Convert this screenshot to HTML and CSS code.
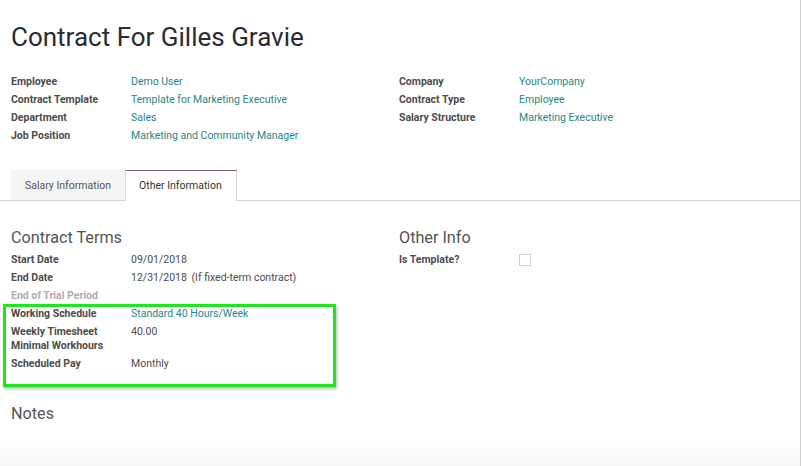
FILE: index.html
```html
<!DOCTYPE html>
<html>
<head>
<meta charset="utf-8">
<link rel="stylesheet" href="styles.css">
</head>
<body>
<div class="sheet">
  <h1 class="title">Contract For Gilles Gravie</h1>
  <div class="group">
    <div class="fields">
      <div class="lbl">Employee</div><div class="val link">Demo User</div>
      <div class="lbl">Contract Template</div><div class="val link">Template for Marketing Executive</div>
      <div class="lbl">Department</div><div class="val link">Sales</div>
      <div class="lbl">Job Position</div><div class="val link">Marketing and Community Manager</div>
    </div>
    <div class="fields">
      <div class="lbl">Company</div><div class="val link">YourCompany</div>
      <div class="lbl">Contract Type</div><div class="val link">Employee</div>
      <div class="lbl">Salary Structure</div><div class="val link">Marketing Executive</div>
    </div>
  </div>
  <div class="tabs">
    <div class="tab">Salary Information</div>
    <div class="tab active">Other Information</div>
  </div>
  <div class="tab-content">
    <div class="group">
      <div class="col">
        <h2 class="sub">Contract Terms</h2>
        <div class="fields">
          <div class="lbl">Start Date</div><div class="val">09/01/2018</div>
          <div class="lbl">End Date</div><div class="val">12/31/2018 <span class="hint">(If fixed-term contract)</span></div>
          <div class="lbl muted">End of Trial Period</div><div class="val"></div>
        </div>
        <div class="highlight">
          <div class="fields">
            <div class="lbl">Working Schedule</div><div class="val link">Standard 40 Hours/Week</div>
            <div class="lbl">Weekly Timesheet Minimal Workhours</div><div class="val">40.00</div>
            <div class="lbl">Scheduled Pay</div><div class="val">Monthly</div>
          </div>
        </div>
      </div>
      <div class="col">
        <h2 class="sub">Other Info</h2>
        <div class="fields">
          <div class="lbl">Is Template?</div><div class="val"><span class="checkbox"></span></div>
        </div>
      </div>
    </div>
    <h2 class="sub notes">Notes</h2>
  </div>
  <div class="fade"></div>
</div>
</body>
</html>
```
FILE: styles.css
```css
* { box-sizing: border-box; }
html, body { margin: 0; padding: 0; background: #fff; }
body {
  font-family: Roboto, "Liberation Sans", sans-serif;
  font-size: 10.5px;
  color: #4c4c4c;
  width: 801px;
  height: 466px;
  overflow: hidden;
}
.sheet {
  width: 801px;
  height: 466px;
  border-right: 1px solid #cfcfcf;
  display: flex;
  flex-direction: column;
}
.title {
  margin: 22px 0 0 11px;
  font-size: 26px;
  line-height: 30px;
  font-weight: 400;
  color: #2b2b33;
}
.group {
  display: grid;
  grid-template-columns: 388px 388px;
  padding-left: 11px;
}
.sheet > .group { margin-top: 21px; }
.fields {
  display: grid;
  grid-template-columns: 120px 1fr;
  align-content: start;
}
.lbl, .val {
  line-height: 14px;
  padding: 2px 0;
}
.lbl {
  font-weight: 700;
  color: #4c4c4c;
  padding-right: 10px;
}
.lbl.muted { color: #adadad; }
.val { color: #4c4c4c; }
.link { color: #1f8787; }
.hint { color: #4c4c4c; margin-left: 2px; }
.tabs {
  display: flex;
  margin-top: 25px;
  padding-left: 11px;
  border-bottom: 1px solid #d4d4d4;
  height: 31px;
}
.tab {
  height: 30px;
  line-height: 31px;
  padding: 0 14px;
  color: #555;
  background: #f5f5f5;
}
.tab.active {
  background: #fff;
  color: #333;
  padding: 0 14px 0 13px;
  border-top: 1px solid #7c5b79;
  border-left: 1px solid #d4d4d4;
  border-right: 1px solid #d4d4d4;
  height: 31px;
  line-height: 30px;
  margin-bottom: -1px;
}
.tab-content { padding-top: 27px; }
.tab-content > .group { padding-left: 11px; }
.sub {
  margin: 0;
  font-size: 16.2px;
  line-height: 20px;
  font-weight: 400;
  color: #555;
  padding-bottom: 3px;
}
.highlight {
  width: 333px;
  margin: -1px 0 0 -8px;
  border: 3px solid #1ee61e;
  padding: 0 0 11px 5px;
  box-shadow: 1px 2px 3px rgba(0, 0, 0, 0.28);
}
.highlight .fields { margin-top: -2px; }
.checkbox {
  display: inline-block;
  width: 12px;
  height: 12px;
  border: 1px solid #cfcfcf;
  margin-top: -1px;
  vertical-align: middle;
}
.notes { margin: 17px 0 0 11px; }
.fade {
  margin-top: auto;
  height: 22px;
  background: linear-gradient(#fefefe, #f7f7f7);
}
```
